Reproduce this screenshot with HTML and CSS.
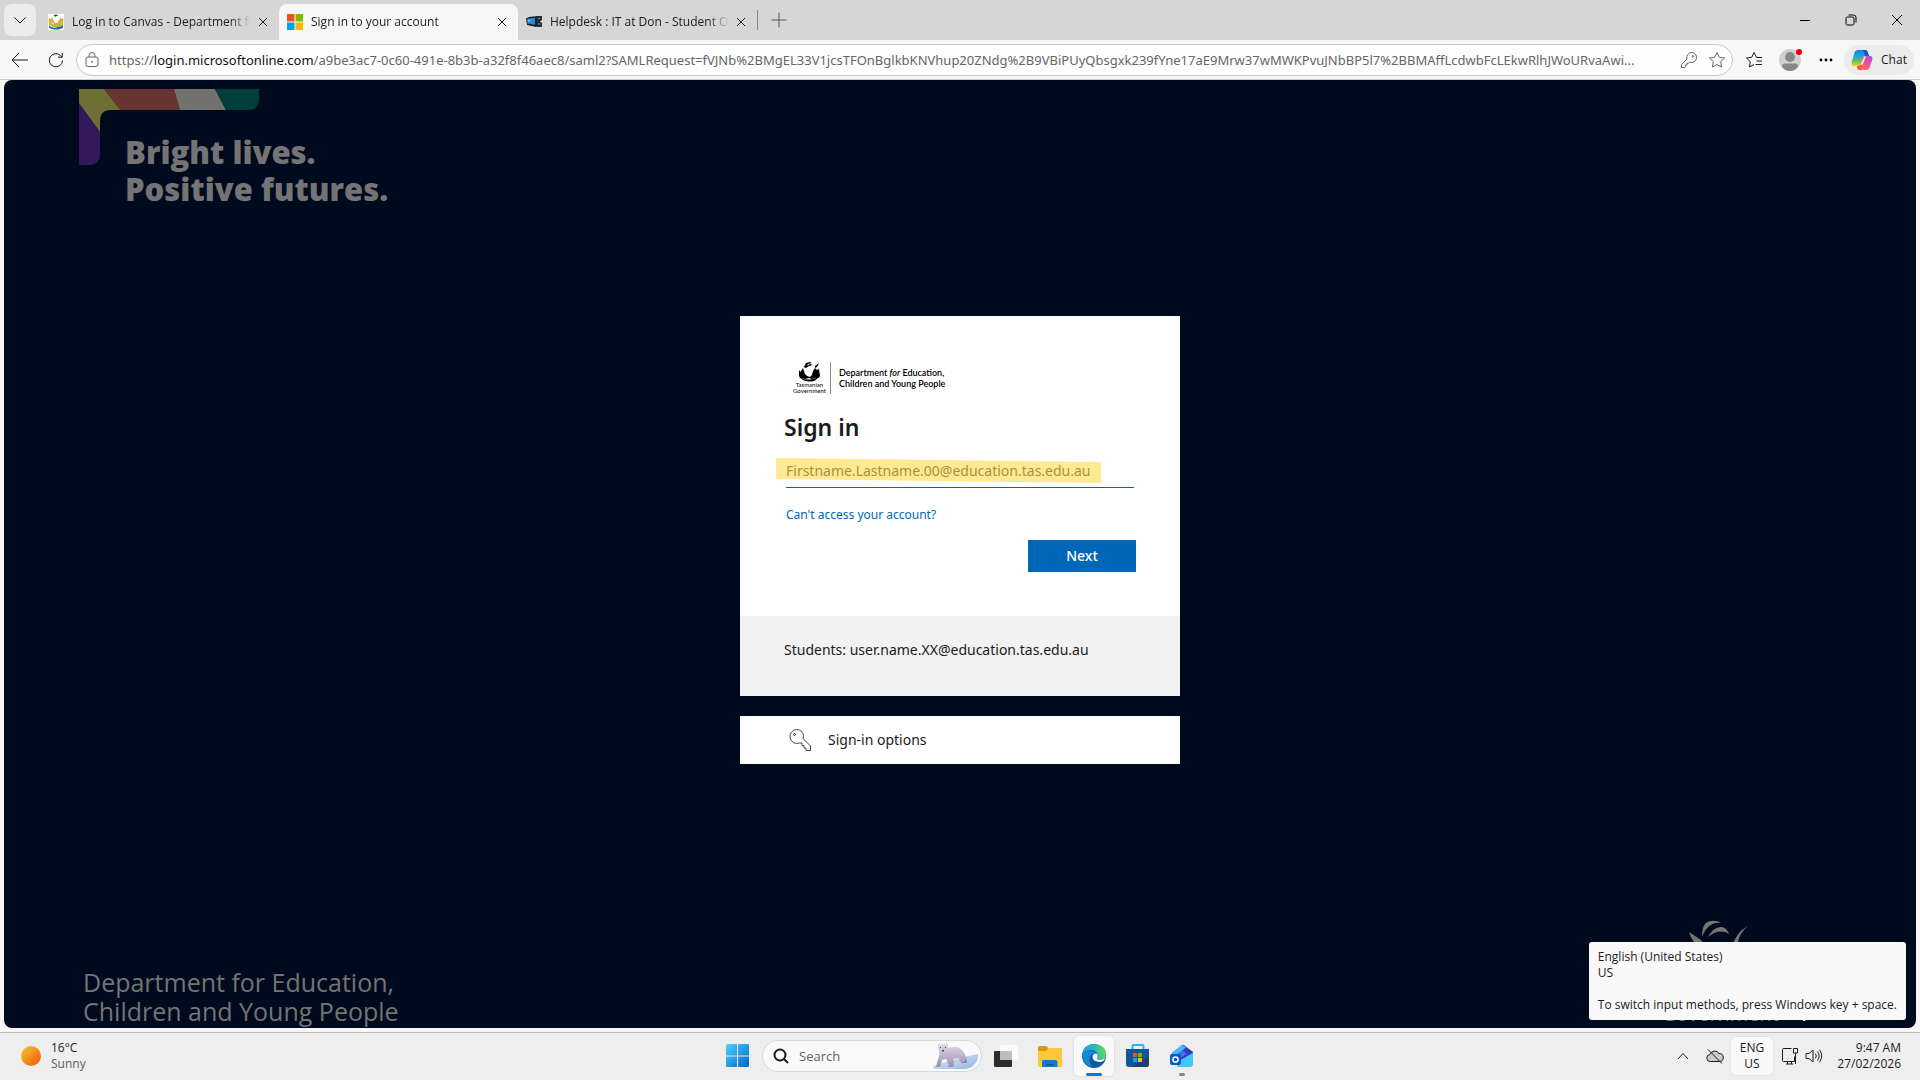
FILE: index.html
```
<!DOCTYPE html>
<html lang="en">

<head>
    <meta charset="UTF-8">
    <meta name="viewport" content="width=device-width, initial-scale=1.0">
    <title>Sign in to your account</title>

    <link rel="stylesheet" href="styles.css">

</head>

<body>
    <header class="browser">
        <div class="tabstrip">
            <button class="tab-menu" aria-label="Tab actions">
                <svg width="14" height="14" viewBox="0 0 14 14" class="line"><path d="M1.5 4.5 7 10l5.500-5.500" /></svg>
            </button>
            <div class="tab">
                <svg width="16" height="16" viewBox="0 0 16 16">
                    <path fill="#fff" d="M0 0h16v16H0z" />
                    <path fill="#333" d="M5 1.500 8 .5l3 1.500-2-.3L7 3l-.5-1.200z" />
                    <path fill="#c9b73c" d="M.5 4 3 5l1-2 1.500 3L7 9h2l2-3 1.500-3 .7 2L15.500 4 15 11l-4 2H5l-4-2z" />
                    <path fill="#fff" d="M6 4.500h4L9.500 8h-3zM3 8l3 1.500-1 1z" />
                    <path fill="#1d6a96" d="M1 11.500c3 2 4 2.500 7 2s5-1 7-2.500v2.500c-2 1.500-4 2-7 2s-5-.5-7-2z" />
                </svg>
                <span class="tab-title">Log in to Canvas - Department for</span>
                <button class="close" aria-label="Close tab">
                    <svg width="10" height="10" viewBox="0 0 10 10" class="line"><path d="m1 1 8 8M9 1 1 9" /></svg>
                </button>
            </div>
            <div class="tab active">
                <svg width="16" height="16" viewBox="0 0 16 16">
                    <path fill="#f25022" d="M0 0h7.500v7.500H0z" />
                    <path fill="#7fba00" d="M8.500 0H16v7.500H8.500z" />
                    <path fill="#00a4ef" d="M0 8.500h7.500V16H0z" />
                    <path fill="#ffb900" d="M8.500 8.500H16V16H8.500z" />
                </svg>
                <span class="tab-title">Sign in to your account</span>
                <button class="close" aria-label="Close tab">
                    <svg width="10" height="10" viewBox="0 0 10 10" class="line"><path d="m1 1 8 8M9 1 1 9" /></svg>
                </button>
            </div>
            <div class="tab">
                <svg width="16" height="16" viewBox="0 0 16 16">
                    <path fill="#12202f" d="M0 4.500 3 3l9-1 1 9-3 2-9-2z" />
                    <path fill="#2f86d0" d="m1 5 8-1.200v7L1.500 9.500z" />
                    <path fill="#5ab4ee" d="m2 5.500 4-.5-3 3.500H2z" />
                    <path fill="#222a33" d="M10 2h6v4l-2 1.500 2 1.500v4h-5z" />
                    <path fill="#8a959f" d="M12 4h2v1h-2zM12 9.500h2.500v1H12z" />
                </svg>
                <span class="tab-title">Helpdesk : IT at Don - Student Ope</span>
                <button class="close" aria-label="Close tab">
                    <svg width="10" height="10" viewBox="0 0 10 10" class="line"><path d="m1 1 8 8M9 1 1 9" /></svg>
                </button>
            </div>
            <button class="new-tab" aria-label="New tab">
                <svg width="16" height="16" viewBox="0 0 16 16" class="line"><path d="M8 .5v15M.5 8h15" /></svg>
            </button>
            <div class="window-controls">
                <button aria-label="Minimize">
                    <svg width="10" height="10" viewBox="0 0 10 10" class="line"><path d="M0 5.500h10" /></svg>
                </button>
                <button aria-label="Restore">
                    <svg width="12" height="12" viewBox="0 0 12 12" class="line">
                        <rect x="1" y="3" width="8" height="8" rx="1.500" />
                        <path d="M3.500 1H8.500Q11 1 11 3.500V8.500" />
                    </svg>
                </button>
                <button aria-label="Close">
                    <svg width="12" height="12" viewBox="0 0 12 12" class="line"><path d="m1 1 10 10M11 1 1 11" /></svg>
                </button>
            </div>
        </div>

        <div class="toolbar">
            <button class="tool" aria-label="Back">
                <svg width="18" height="16" viewBox="0 0 18 16" class="line"><path d="M17 8H1.500M8 1 1.200 8 8 15" /></svg>
            </button>
            <button class="tool" aria-label="Refresh">
                <svg width="16" height="16" viewBox="0 0 16 16" class="line"><path d="M14.500 8.500A6.600 6.600 0 1 1 12.500 3.500L14 5M14.200 1v4.200H10" /></svg>
            </button>
            <div class="address">
                <svg width="14" height="16" viewBox="0 0 14 16" class="line">
                    <rect x="1" y="5" width="12" height="9.500" rx="2" />
                    <path d="M4 5V3.500a3 3 0 0 1 6 0V5" />
                    <circle cx="7" cy="9.800" r=".6" />
                </svg>
                <div class="url">https://<b>login.microsoftonline.com</b>/a9be3ac7-0c60-491e-8b3b-a32f8f46aec8/saml2?SAMLRequest=fVJNb%2BMgEL33V1jcsTFOnBglkbKNVhup20ZNdg%2B9VBiPUyQbsgxk239fYne17aE9Mrw37wMWKPvuJNbBP5l7%2BBMAffLcdwbFcLEkwRlhJWoURvaAwi...</div>
                <button aria-label="Password">
                    <svg width="18" height="18" viewBox="0 0 18 18" class="line">
                        <path d="M11.500 1.500a5 5 0 1 1-1.800 9.600L8.500 12.300H7v1.700H5.300v1.800L4.600 16.500H1.500v-3L7 8A5 5 0 0 1 11.500 1.500z" />
                        <circle cx="12.700" cy="5.300" r=".7" />
                    </svg>
                </button>
                <button aria-label="Add to favorites">
                    <svg width="18" height="18" viewBox="0 0 18 18" class="line"><path d="m9 1.500 2.300 4.800 5.200.7-3.800 3.700.9 5.300L9 13.500 4.400 16l.9-5.300L1.500 7l5.200-.7z" /></svg>
                </button>
            </div>
            <button class="tool" aria-label="Favorites">
                <svg width="18" height="18" viewBox="0 0 18 18" class="line"><path d="M17 6.500h-5.500L9 1.500 6.700 6.300 1.500 7l3.800 3.700L4.400 16 9 13.500M11.500 10H17M10.500 13.500H17" /></svg>
            </button>
            <button class="tool" aria-label="Profile">
                <svg width="24" height="24" viewBox="0 0 24 24">
                    <circle cx="12" cy="12" r="11" fill="#d2d0ce" />
                    <circle cx="12" cy="9" r="5" fill="#8a8886" />
                    <path fill="#8a8886" d="M4 18.500q0-3 3-3h10q3 0 3 3Q17 23 12 23t-8-4.500z" />
                    <circle cx="21" cy="4" r="3" fill="#e3000f" />
                </svg>
            </button>
            <button class="tool" aria-label="Settings and more">
                <svg width="14" height="4" viewBox="0 0 14 4"><circle cx="2" cy="2" r="1.400" /><circle cx="7" cy="2" r="1.400" /><circle cx="12" cy="2" r="1.400" /></svg>
            </button>
            <button class="chat">
                <svg width="22" height="22" viewBox="0 0 22 22">
                    <defs>
                        <linearGradient id="copilotA" x1="0" y1="0" x2="0" y2="1">
                            <stop offset="0" stop-color="#1a7fe8" />
                            <stop offset=".4" stop-color="#1fa8dc" />
                            <stop offset=".7" stop-color="#6bc04a" />
                            <stop offset="1" stop-color="#f8d21c" />
                        </linearGradient>
                        <linearGradient id="copilotB" x1="1" y1="0" x2="0" y2="1">
                            <stop offset="0" stop-color="#a94ce8" />
                            <stop offset=".5" stop-color="#ee5590" />
                            <stop offset="1" stop-color="#ff8a3c" />
                        </linearGradient>
                    </defs>
                    <path fill="url(#copilotA)" d="M6.500 1H14q2 0 2.700 2L18 7h-4q-2 0-2.700 2l-1.600 5.500Q9 17 7 17H3Q0 17 .7 13L3.500 3.500Q4.300 1 6.500 1z" />
                    <path fill="#1556c8" d="M12 1h2q2 0 2.700 2L18 7h-4z" />
                    <path fill="url(#copilotB)" d="M15.500 21H9q-2 0-2.700-2L6 17h1q2 0 2.700-2.500L11.300 9Q12 7 14 7h5q3 0 2.300 3.500L18.500 18.500Q17.700 21 15.500 21z" />
                    <path fill="#f05a38" d="M6 17h1q2 0 2.700-2L11 17l-1 4H9q-2 0-2.700-2z" />
                    <path fill="#ebebeb" d="M13 8q1-1 2-1l-2.800 7.500Q11.500 16 9 16q1-.5 1.700-3z" />
                </svg>
                Chat
            </button>
        </div>
    </header>

    <main class="page">
        <div class="backdrop">
            <div class="brand">
                <svg width="182" height="76" viewBox="0 0 182 76">
                    <path fill="#6f6e34" d="M0 0h25l17 21H32Q21 21 21 32v11L0 15z" />
                    <path fill="#34195a" d="m0 14 21 29v22q0 11-11 11H0z" />
                    <path fill="#683430" d="M25 0h70l6 21H41z" />
                    <path fill="#72716d" d="M95 0h41l11 21h-46z" />
                    <path fill="#003f39" d="M136 0h44v10q0 11-11 11h-22z" />
                </svg>
                <p class="slogan">Bright lives.<br>Positive futures.</p>
            </div>
            <div class="backdrop-bottom">
                <p class="department">Department for Education,<br>Children and Young People</p>
                <div class="crest">
                    <svg width="64" height="60" viewBox="0 0 64 60">
                        <path fill="#747474" d="M14 16Q14 2 23 1q6-1 10 2-12-2-19 13zM20 17q6-11 14-10 5 1 7 7-9-6-21 3zM1 12l12 8 8 12Q6 28 1 12zM60 6Q48 16 50 30l-6-3Q48 12 60 6z" />
                    </svg>
                    <p>Government</p>
                </div>
            </div>
        </div>

        <div class="signin">
            <form class="card">
                <div class="logo">
                    <div class="logo-crest">
                        <svg width="22" height="20" viewBox="0 0 22 20">
                            <path d="M3 4 6 5 8 1l4-1 2 1-4 1-1 2 3-2 3 1-4 1-3 2zM17 4l4-3-2 4-2 1z" />
                            <path d="m1 8 1.500 2L5 6l1 3 1 3 2 2 3 1 2-2 1-4 2-3 2 2 2-1 1 7q-1 3-4 2l-4 1-3-1-4 1-5-1-1-2z" />
                            <path d="M2 15q3 3 9 2.500T20 15q-2 5-9 4.500T2 15z" />
                        </svg>
                        <span>Tasmanian<br>Government</span>
                    </div>
                    <div class="logo-name">Department <i>for</i> Education,<br>Children and Young People</div>
                </div>
                <h1>Sign in</h1>
                <div class="field">
                    <input type="email" id="username" aria-label="Email address" placeholder="Firstname.Lastname.00@education.tas.edu.au">
                    <span class="marker"></span>
                </div>
                <a href="#" class="help">Can't access your account?</a>
                <button type="button" class="next">Next</button>
                <p class="hint">Students: user.name.XX@education.tas.edu.au</p>
            </form>
            <button class="options">
                <svg width="24" height="24" viewBox="0 0 24 24" class="line">
                    <path d="M8.500 1.500a7 7 0 0 1 6.700 9.200L22.500 18v4.500H18v-2.500h-2v-2.500h-2v-2.500h-2.500A7 7 0 1 1 8.500 1.500z" />
                    <circle cx="6.500" cy="6.500" r="1" />
                </svg>
                Sign-in options
            </button>
        </div>

        <footer class="links">
            <a href="#">Privacy &amp; cookies</a>
        </footer>
    </main>

    <nav class="taskbar">
        <button class="weather">
            <svg width="20" height="20" viewBox="0 0 20 20">
                <defs>
                    <linearGradient id="sun" x1="0" y1="0" x2="1" y2="1">
                        <stop offset=".1" stop-color="#f2bd35" />
                        <stop offset=".8" stop-color="#f26a10" />
                    </linearGradient>
                </defs>
                <circle cx="10" cy="10" r="10" fill="url(#sun)" />
            </svg>
            <span>16°C<br><small>Sunny</small></span>
        </button>

        <div class="apps">
            <button class="app" aria-label="Start">
                <svg width="24" height="24" viewBox="0 0 24 24">
                    <defs>
                        <linearGradient id="win" x1="0" y1="0" x2="1" y2="1">
                            <stop offset="0" stop-color="#4fd0fb" />
                            <stop offset="1" stop-color="#0067c8" />
                        </linearGradient>
                    </defs>
                    <path fill="url(#win)" d="M1.500 0H11v11.500H0v-10Q0 0 1.500 0zM12 0h10Q23 0 23 1.500v10H12zM0 12.500h11V23H1.500Q0 23 0 21.500zM12 12.500h11v9Q23 23 21.500 23H12z" />
                </svg>
            </button>
            <label class="search">
                <svg width="16" height="16" viewBox="0 0 16 16" class="line bold"><circle cx="7" cy="7" r="5.500" /><path d="m11 11 4 4" /></svg>
                <input type="text" placeholder="Search" aria-label="Search">
                <svg width="48" height="28" viewBox="0 0 48 28">
                    <defs>
                        <linearGradient id="ice" x1="0" y1="0" x2="1" y2="1">
                            <stop offset="0" stop-color="#e4eff9" />
                            <stop offset="1" stop-color="#8fb4dc" />
                        </linearGradient>
                        <linearGradient id="bear" x1="0" y1="0" x2="0" y2="1">
                            <stop offset="0" stop-color="#e5dbe9" />
                            <stop offset="1" stop-color="#9c8fb5" />
                        </linearGradient>
                    </defs>
                    <path fill="url(#ice)" d="M2 25q2-3 10-4l20-6 15-3q1 6-4 11-4 4-10 4H6q-5 0-4-2z" />
                    <path fill="#8d7fa6" d="M17 15h5l1 9h-5zM29 15l6 0 1 6h-5z" />
                    <path fill="url(#bear)" d="M7 3q1-3 3-1h4q3-2 3 1v3q8-3 13 1 5 5 5 9l-2 4h-4l-1-4-6 1 1 6-1 2h-5l1-2-3-6-4 1-1 5-1 2H5l1-4 2-7q1-3 0-5-1-3-1-6z" />
                    <path fill="#4c4058" d="M9 5h1v1H9zM14 5h1v1h-1zM11 8h2v1.500h-2z" />
                </svg>
            </label>
            <button class="app" aria-label="Task view">
                <svg width="24" height="24" viewBox="0 0 24 24">
                    <rect x="0" y="7" width="18" height="16" rx="1" fill="#2c2c2c" />
                    <rect x="6" y="1" width="18" height="15" rx="1" fill="#fff" fill-opacity=".75" />
                    <rect x="6" y="7" width="12" height="9" fill="#bdbdbd" />
                </svg>
            </button>
            <button class="app" aria-label="File Explorer">
                <svg width="24" height="24" viewBox="0 0 24 24">
                    <path fill="#d89a10" d="M0 3.500Q0 2 1.500 2H8l2.500 2v3H0z" />
                    <path fill="#fdc93c" d="M0 7h8l3-3h11.500Q24 4 24 5.500v16Q24 23 22.500 23h-21Q0 23 0 21.500z" />
                    <path fill="#157acb" d="M4 23v-5q0-2 2-2h11.500q2 0 2 2v5z" />
                    <path fill="#0b5a9e" d="M8 20h8v1.500H8z" />
                </svg>
            </button>
            <button class="app open" aria-label="Microsoft Edge">
                <svg width="24" height="24" viewBox="0 0 24 24">
                    <defs>
                        <linearGradient id="edge" x1="0" y1="0" x2="1" y2="0">
                            <stop offset="0" stop-color="#1f9ee0" />
                            <stop offset=".5" stop-color="#28b9c2" />
                            <stop offset="1" stop-color="#62d94e" />
                        </linearGradient>
                    </defs>
                    <circle cx="12" cy="12" r="12" fill="#0f59a8" />
                    <path fill="#1b87d4" d="M0 11Q3 6 8.500 6.500 13 7 14 10q-4-1-6 3-2 5 2 10Q1 21 0 11z" />
                    <path fill="url(#edge)" d="M0 11Q1.500 0 12 0q12 1 12 10 0 6-6 6-4 0-3-2 2-3-.5-6Q12 5.500 8 6 2 6.500 0 11z" />
                    <path fill="#f8f8f8" d="M15 9.500q1.500 2.500 0 4.500-1 2 3 2 3 0 5-2-1 4-5 4-7-.5-7.500-4.500Q10.500 9 15 9.500z" />
                </svg>
            </button>
            <button class="app" aria-label="Microsoft Store">
                <svg width="24" height="24" viewBox="0 0 24 24">
                    <path fill="none" stroke="#29b4ec" stroke-width="2" d="M6.500 6V2q0-1 1-1h9q1 0 1 1v4" />
                    <path fill="#14549b" d="M0 5h23v15q0 3-3 3H3q-3 0-3-3z" />
                    <path fill="#1e3f6c" d="M23 12v8q0 3-3 3H6z" />
                    <path fill="#f25022" d="M7 9h4v4H7z" />
                    <path fill="#7fba00" d="M12 9h4v4h-4z" />
                    <path fill="#00a4ef" d="M7 14h4v4H7z" />
                    <path fill="#ffb900" d="M12 14h4v4h-4z" />
                </svg>
            </button>
            <button class="app running" aria-label="Outlook">
                <svg width="24" height="24" viewBox="0 0 24 24">
                    <path fill="#1b64d8" d="M2 9 12 1q1-.7 2 0l9 7v3L10 20 2 14z" />
                    <path fill="#47b9fa" d="M2 9 12 1l4 2.500L5 12z" />
                    <path fill="#3d38b8" d="m16 3.500 7 4.500-14 9-4-4z" />
                    <path fill="#2f7df0" d="m12 6.500 5 3-8 6-3-3z" />
                    <path fill="#42c8fb" d="M23 9v11q0 3-3 3H7V18z" />
                    <rect x="0" y="10" width="11" height="11" rx="2" fill="#0b57c5" />
                    <circle cx="5.500" cy="15.500" r="2.600" fill="none" stroke="#fff" stroke-width="1.500" />
                </svg>
            </button>
        </div>

        <div class="tray">
            <button aria-label="Show hidden icons">
                <svg width="12" height="8" viewBox="0 0 12 8" class="line"><path d="m1 7 5-5.500L11 7" /></svg>
            </button>
            <button aria-label="OneDrive">
                <svg width="18" height="16" viewBox="0 0 18 16" class="line">
                    <path fill="#c9c9c9" d="M4.500 13.500a3.500 3.500 0 0 1-.5-7A5 5 0 0 1 13 5.500a4 4 0 0 1 .5 8z" />
                    <path d="m2 1.500 14 14" />
                </svg>
            </button>
            <button class="language">ENG<br>US</button>
            <button class="status" aria-label="Network and volume">
                <svg width="18" height="18" viewBox="0 0 18 18" class="line">
                    <path d="M10.500 1.500h-8q-1 0-1 1v11q0 1 1 1h11v-5M5 17h7M6.500 14.500V17M10.500 14.500V17M12.500 1.500h4V6h-4zM14.500 6v11" />
                </svg>
                <svg width="18" height="16" viewBox="0 0 18 16" class="line">
                    <path d="M1 5.500h3L8 2v12l-4-3.500H1zM10.500 5.500q1.500 2.500 0 5M12.500 3.500q3.300 4.500 0 9M14.500 1.800q4.500 6 0 12.400" />
                </svg>
            </button>
            <button class="clock">9:47 AM<br>27/02/2026</button>
        </div>

        <div class="tooltip" role="tooltip">English (United States)<br>US<br><br>To switch input methods, press Windows key + space.</div>
    </nav>
</body>

</html>
```

FILE: styles.css
```
* {
    font-family: 'Open Sans', 'Noto Sans', sans-serif;
    padding: 0px;
    box-sizing: border-box;
    margin: 0px;
}

body {
    display: flex;
    flex-direction: column;
    height: 100vh;
    font-size: 12px;
    line-height: 16px;
    color: #1b1b1b;
    background-color: #f7f7f7;
    overflow: hidden;
}

button {
    display: flex;
    align-items: center;
    justify-content: center;
    flex-shrink: 0;
    border: none;
    background: none;
    color: inherit;
    font-size: inherit;
    line-height: inherit;
}

svg {
    display: block;
    flex-shrink: 0;
}

.line {
    fill: none;
    stroke: currentColor;
    stroke-linejoin: round;
}

.bold {
    stroke-width: 2;
}

/* browser window */

.tabstrip {
    display: flex;
    align-items: center;
    height: 40px;
    padding-left: 4px;
    background-color: #d6d6d6;
}

.tab-menu {
    width: 32px;
    height: 32px;
    margin-right: 4px;
    border-radius: 8px;
    background-color: #ebebeb;
}

.tab {
    display: flex;
    align-items: center;
    gap: 8px;
    width: 239px;
    height: 36px;
    padding: 0 6px 0 8px;
    align-self: flex-end;
}

.tab .close {
    margin-left: -6px;
}

.tab.active {
    border-radius: 8px 8px 0 0;
    background-color: #f7f7f7;
}

.tab-title {
    flex: 1;
    overflow: hidden;
    white-space: nowrap;
    -webkit-mask-image: linear-gradient(to right, #000 88%, transparent);
    mask-image: linear-gradient(to right, #000 88%, transparent);
}

.close {
    width: 20px;
    height: 20px;
}

.new-tab {
    width: 42px;
    height: 20px;
    border-left: 1px solid #888;
    color: #555;
}

.window-controls {
    display: flex;
    margin-left: auto;
    color: #000;
}

.window-controls button {
    width: 46px;
    height: 40px;
}

.toolbar {
    display: flex;
    align-items: center;
    height: 40px;
    padding: 0 6px 0 2px;
    border-bottom: 1px solid #ccc;
}

.tool {
    width: 36px;
    height: 32px;
}

.address {
    display: flex;
    flex: 1;
    align-items: center;
    gap: 10px;
    min-width: 0;
    height: 32px;
    padding: 0 6px 0 8px;
    border: 1px solid #c8c8c8;
    border-radius: 16px;
    margin: 0 3px 0 2px;
    color: #666;
    background-color: #fdfdfd;
}

.url {
    flex: 1;
    overflow: hidden;
    white-space: nowrap;
    font-family: 'Noto Sans', sans-serif;
    font-size: 13px;
    line-height: 20px;
}

.url b {
    font-family: inherit;
    font-weight: 400;
    color: #111;
}

.chat {
    gap: 8px;
    width: 70px;
    height: 30px;
    border-radius: 15px;
    background-color: #ebebeb;
}

/* login page */

.page {
    display: grid;
    grid-template-rows: 1fr 28px;
    flex: 1;
    min-height: 0;
    margin: 0 4px 4px;
    border-radius: 8px;
    background-color: #000a1e;
    overflow: hidden;
}

.backdrop {
    grid-area: 1 / 1 / 3 / 2;
    display: flex;
    flex-direction: column;
    justify-content: space-between;
    padding: 9px 137px 2px 75px;
    color: #747474;
}

.brand {
    display: grid;
}

.brand svg,
.slogan {
    grid-area: 1 / 1;
}

.slogan {
    padding: 45px 0 0 46px;
    font-size: 31px;
    font-weight: 800;
    line-height: 37px;
}

.backdrop-bottom {
    display: flex;
    align-items: flex-end;
    justify-content: space-between;
}

.department {
    padding-left: 4px;
    font-size: 25px;
    line-height: 29px;
}

.crest {
    display: flex;
    flex-direction: column;
    align-items: center;
    gap: 22px;
    font-size: 20px;
    line-height: 24px;
}

.signin {
    grid-area: 1 / 1;
    display: flex;
    flex-direction: column;
    align-self: center;
    justify-self: center;
    gap: 20px;
    width: 440px;
    max-width: 100%;
    font-size: 14px;
    line-height: 20px;
}

.signin p,
.signin h1,
.signin a,
.signin input,
.signin button {
    font-family: 'Noto Sans', sans-serif;
}

.card {
    display: flex;
    flex-direction: column;
    padding: 44px 44px 0;
    background-color: #fff;
}

.logo {
    display: flex;
    align-items: center;
    height: 36px;
    padding-left: 9px;
    color: #000;
}

.logo-crest {
    display: flex;
    flex-direction: column;
    align-items: center;
    padding-right: 4px;
    border-right: 1px solid #888;
    font-size: 6px;
    line-height: 6px;
    text-align: center;
}

.logo-crest span,
.logo-name,
.logo-name i {
    font-family: Lato, sans-serif;
}

.logo-name {
    padding-left: 8px;
    font-size: 9px;
    font-weight: 600;
    line-height: 11px;
}

h1 {
    margin: 15px 0 13px;
    font-size: 23px;
    font-weight: 600;
    line-height: 32px;
}

.field {
    position: relative;
    margin: 0 2px;
}

.field input {
    display: block;
    width: 100%;
    height: 32px;
    padding-bottom: 2px;
    border: none;
    border-bottom: 1px solid #0067b8;
    outline: none;
    font-size: 14px;
}

.field input::placeholder {
    color: #555;
}

.marker {
    position: absolute;
    top: 2px;
    left: -10px;
    width: 325px;
    height: 25px;
    background-color: rgba(255, 210, 30, 0.48);
    clip-path: polygon(0 0, 100% 16%, 100% 100%, 0 84%);
    pointer-events: none;
}

.help {
    margin: 17px 2px 15px;
    font-size: 12px;
    color: #0067b8;
    text-decoration: none;
}

.next {
    align-self: flex-end;
    width: 108px;
    height: 32px;
    font-weight: 500;
    color: #fff;
    background-color: #0067b8;
}

.hint {
    margin: 44px -44px 0;
    padding: 24px 44px 36px;
    background-color: #f2f2f2;
}

.options {
    justify-content: flex-start;
    gap: 16px;
    height: 48px;
    padding-left: 48px;
    background-color: #fff;
}

.options svg {
    color: #444;
}

.links {
    grid-area: 2 / 1;
    display: flex;
    justify-content: flex-end;
    align-items: center;
    padding-right: 50px;
}

.links a {
    color: #fff;
    text-decoration: none;
}

/* taskbar */

.taskbar {
    position: relative;
    display: grid;
    grid-template-columns: 1fr auto 1fr;
    align-items: center;
    height: 48px;
    padding-bottom: 2px;
    border-top: 1px solid #bbb;
    background-color: #eee;
}

.weather {
    justify-self: start;
    gap: 10px;
    padding-left: 21px;
    text-align: left;
}

.weather small {
    font-size: 12px;
    color: #5c5c5c;
}

.apps {
    display: flex;
    align-items: center;
    gap: 4px;
}

.app {
    position: relative;
    width: 40px;
    height: 40px;
    border-radius: 5px;
}

.app.open {
    background-color: #f9f9f9;
    box-shadow: 0 0 1px 1px #e2e2e2;
}

.app.open::after,
.app.running::after {
    content: "";
    position: absolute;
    bottom: 0;
    width: 6px;
    height: 3px;
    border-radius: 2px;
    background-color: #868686;
}

.app.open::after {
    width: 16px;
    background-color: #0078d4;
}

.search {
    display: flex;
    align-items: center;
    gap: 10px;
    width: 220px;
    height: 32px;
    padding: 0 2px 0 10px;
    border: 1px solid #d8d8d8;
    border-radius: 16px;
    background-color: #fafafa;
}

.search input {
    flex: 1;
    min-width: 0;
    border: none;
    outline: none;
    background: none;
    font-size: 13px;
}

.search input::placeholder {
    color: #5e5e5e;
}

.tray {
    display: flex;
    align-items: center;
    justify-self: end;
    padding-right: 19px;
}

.tray button {
    min-width: 32px;
    height: 38px;
}

.tray .language {
    width: 42px;
    border-radius: 5px;
    background-color: #f9f9f9;
    box-shadow: 0 0 1px 1px #e4e4e4;
}

.status {
    gap: 6px;
    padding: 0 8px;
}

.tray .clock {
    min-width: 70px;
    justify-content: flex-end;
    text-align: right;
}

.tooltip {
    position: absolute;
    right: 14px;
    bottom: 60px;
    padding: 7px 9px;
    border-radius: 3px;
    background-color: #f9f9f9;
    white-space: nowrap;
}
```
